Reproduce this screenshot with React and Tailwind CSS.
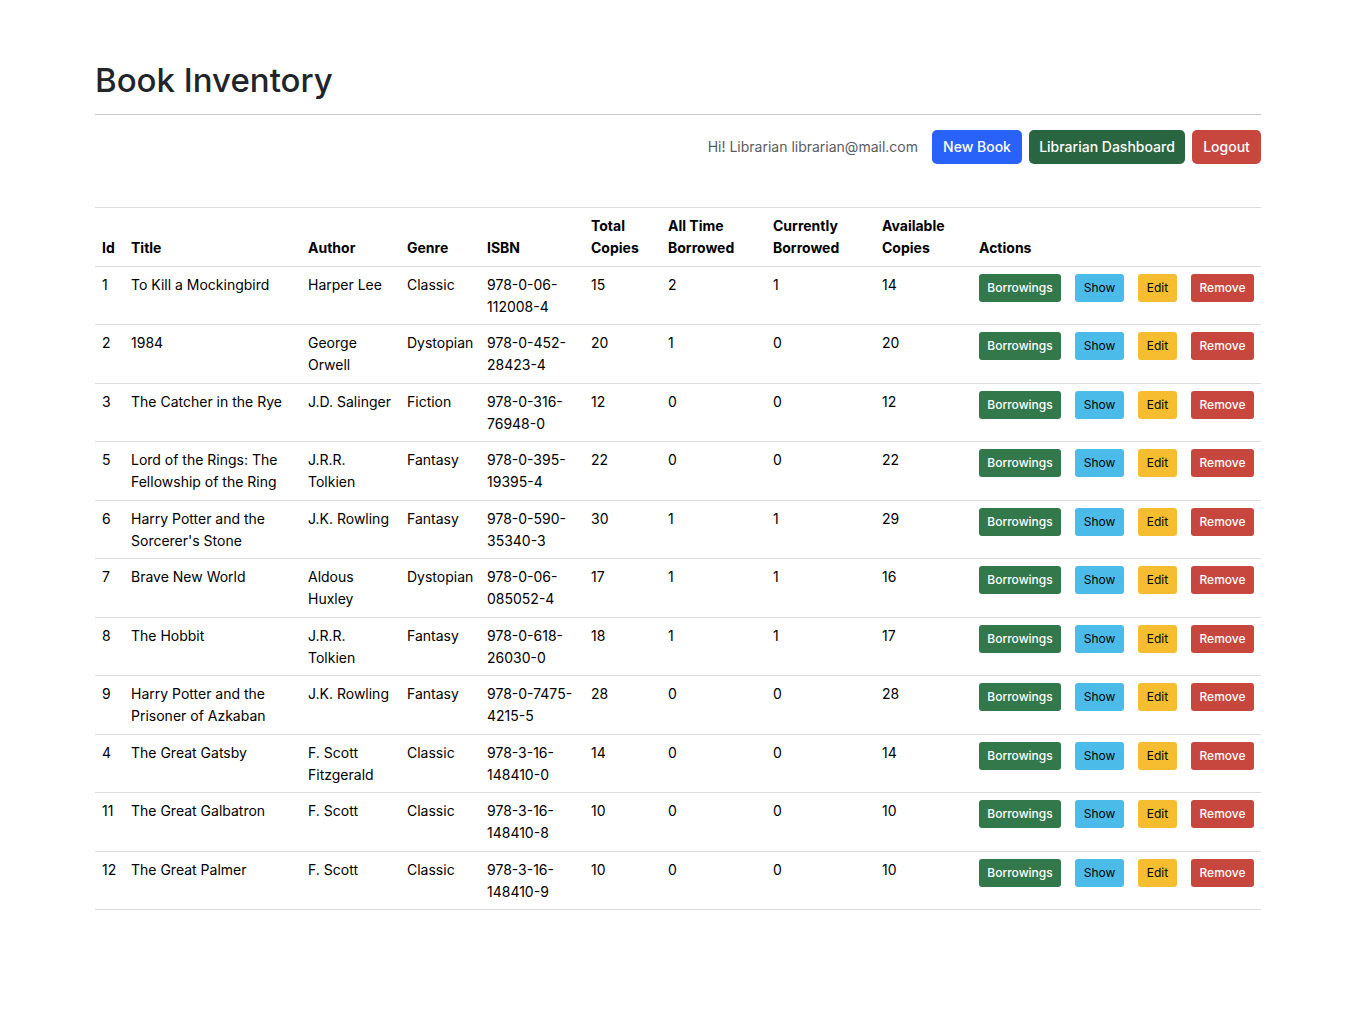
const books = [
  [1, "To Kill a Mockingbird", "Harper Lee", "Classic", "978-0-06-112008-4", 15, 2, 1, 14],
  [2, "1984", "George Orwell", "Dystopian", "978-0-452-28423-4", 20, 1, 0, 20],
  [3, "The Catcher in the Rye", "J.D. Salinger", "Fiction", "978-0-316-76948-0", 12, 0, 0, 12],
  [5, "Lord of the Rings: The Fellowship of the Ring", "J.R.R. Tolkien", "Fantasy", "978-0-395-19395-4", 22, 0, 0, 22],
  [6, "Harry Potter and the Sorcerer's Stone", "J.K. Rowling", "Fantasy", "978-0-590-35340-3", 30, 1, 1, 29],
  [7, "Brave New World", "Aldous Huxley", "Dystopian", "978-0-06-085052-4", 17, 1, 1, 16],
  [8, "The Hobbit", "J.R.R. Tolkien", "Fantasy", "978-0-618-26030-0", 18, 1, 1, 17],
  [9, "Harry Potter and the Prisoner of Azkaban", "J.K. Rowling", "Fantasy", "978-0-7475-4215-5", 28, 0, 0, 28],
  [4, "The Great Gatsby", "F. Scott Fitzgerald", "Classic", "978-3-16-148410-0", 14, 0, 0, 14],
  [11, "The Great Galbatron", "F. Scott", "Classic", "978-3-16-148410-8", 10, 0, 0, 10],
  [12, "The Great Palmer", "F. Scott", "Classic", "978-3-16-148410-9", 10, 0, 0, 10],
];

const columns = [
  ["Id", "w-[29px]"],
  ["Title", ""],
  ["Author", "w-[99px]"],
  ["Genre", "w-[80px]"],
  ["ISBN", "w-[104px]"],
  ["Total Copies", "w-[77px]"],
  ["All Time Borrowed", "w-[105px]"],
  ["Currently Borrowed", "w-[109px]"],
  ["Available Copies", "w-[97px]"],
  ["Actions", "w-[289px]"],
];

const actions = [
  ["Borrowings", "w-[82px] bg-[#33784b] text-white font-medium"],
  ["Show", "w-[49px] bg-[#4bbcea] text-black"],
  ["Edit", "w-[39px] bg-[#f6bd30] text-black"],
  ["Remove", "w-[63px] bg-[#c7463e] text-white font-medium"],
];

// Breaks an ISBN only before its publisher/title group.
function isbnLines(isbn) {
  const parts = isbn.split("-");
  return [parts.slice(0, 3).join("-") + "-", parts.slice(3).join("-")];
}

function HeaderButton({ className, children }) {
  return (
    <button
      type="button"
      className={`h-[34px] rounded-[5px] text-center text-sm font-medium whitespace-nowrap text-white ${className}`}
    >
      {children}
    </button>
  );
}

export default function App() {
  return (
    <div className="min-h-screen bg-white pr-[13px] font-['Inter','Liberation_Sans',sans-serif]">
      <main className="mx-auto max-w-[1166px] pt-[58px] pb-12">
        <h1 className="border-b border-[#c8c8c9] pb-3 text-[33px] leading-11 font-medium text-[#212529]">
          Book Inventory
        </h1>

        <div className="mt-[15px] flex items-center justify-end gap-[7px]">
          <p className="mr-[7px] text-sm text-[#595c5f]">Hi! Librarian librarian@mail.com</p>
          <HeaderButton className="w-[90px] bg-[#2962f9]">New Book</HeaderButton>
          <HeaderButton className="w-[156px] bg-[#2a6541]">Librarian Dashboard</HeaderButton>
          <HeaderButton className="w-[69px] bg-[#c7463e]">Logout</HeaderButton>
        </div>

        <table className="mt-[43px] w-full table-fixed border-separate border-spacing-0 text-left text-sm leading-[22px] text-black">
          <thead>
            <tr>
              {columns.map(([name, width]) => (
                <th
                  key={name}
                  scope="col"
                  className={`border-y border-[#dcdde1] px-[7px] pt-[7px] pb-[7px] align-bottom font-bold ${width}`}
                >
                  {name}
                </th>
              ))}
            </tr>
          </thead>
          <tbody>
            {books.map((book) => (
              <tr key={book[0]} className="group">
                {book.map((value, i) => (
                  <td
                    key={i}
                    className="border-b border-[#dcdde1] px-[7px] pt-[7px] pb-[7px] align-top group-odd:pb-[6px]"
                  >
                    {i === 4
                      ? isbnLines(value).map((line) => (
                          <span key={line} className="block whitespace-nowrap">
                            {line}
                          </span>
                        ))
                      : value}
                  </td>
                ))}
                <td className="border-b border-[#dcdde1] px-[7px] pt-[7px] align-top">
                  <div className="flex justify-between">
                    {actions.map(([name, style]) => (
                      <button
                        key={name}
                        type="button"
                        className={`h-7 rounded-[3px] text-center text-xs whitespace-nowrap ${style}`}
                      >
                        {name}
                      </button>
                    ))}
                  </div>
                </td>
              </tr>
            ))}
          </tbody>
        </table>
      </main>
    </div>
  );
}
